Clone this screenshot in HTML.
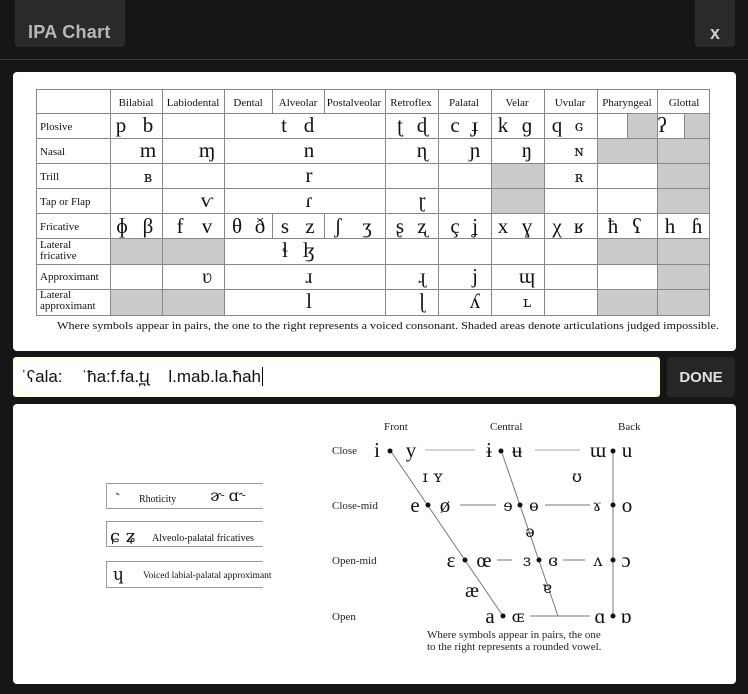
<!DOCTYPE html>
<html><head><meta charset="utf-8"><style>
html,body{margin:0;padding:0;width:748px;height:694px;background:#161616;overflow:hidden;font-family:"Liberation Sans",sans-serif}
.tab{position:absolute;left:15px;top:0;width:110px;height:47px;background:#2a2a2a;border-radius:0 0 4px 4px}
.tab span{position:absolute;left:13px;top:22px;color:#b8b8b8;font-weight:bold;font-size:18px;letter-spacing:0.3px}
.x{position:absolute;left:695px;top:0;width:40px;height:47px;background:#2a2a2a;border-radius:0 0 4px 4px;color:#ccc;font-weight:bold;font-size:18px;text-align:center;line-height:66px}
.hr{position:absolute;left:0;top:59px;width:748px;height:1px;background:#3a3a3a}
.p{position:absolute;background:#fff;border-radius:4px}
.inp{position:absolute;left:13px;top:357px;width:647px;height:40px;background:#fffff0;border-radius:3px}
.inp div{position:absolute;left:5px;top:5px;right:5px;bottom:5px;background:#fff;font-size:17px;line-height:30px;padding-left:3px;color:#111;font-family:"Liberation Sans","DejaVu Sans",sans-serif;white-space:pre}
.done{position:absolute;left:667px;top:357px;width:68px;height:40px;background:#262626;border-radius:3px;color:#e0e0e0;font-weight:bold;font-size:15px;text-align:center;line-height:42px}
svg{position:absolute;left:0;top:0}
svg text{font-family:"Liberation Serif","DejaVu Serif",serif}
svg text.sc{font-family:"DejaVu Serif",serif}
</style></head><body>
<div class="tab"><span>IPA Chart</span></div>
<div class="x">x</div>
<div class="hr"></div>
<div class="p" style="left:13px;top:72px;width:723px;height:279px"></div>
<div class="inp"><div>ˈʕala:    ˈħa:f.fa.t̪ɻ    l.mab.la.ħah<span style="border-left:1px solid #000;margin-left:1px"> </span></div></div>
<div class="done">DONE</div>
<div class="p" style="left:13px;top:404px;width:723px;height:280px"></div>
<svg width="748" height="694" viewBox="0 0 748 694">
<g fill="#cbcbcb">
<rect x="627" y="113" width="30" height="25"/><rect x="684" y="113" width="26" height="25"/>
<rect x="597" y="138" width="113" height="25"/>
<rect x="491" y="163" width="53" height="50"/><rect x="657" y="163" width="53" height="50"/>
<rect x="110" y="238" width="114" height="26"/><rect x="597" y="238" width="113" height="26"/>
<rect x="657" y="264" width="53" height="25"/>
<rect x="110" y="289" width="114" height="27"/><rect x="597" y="289" width="113" height="27"/>
</g>
<g stroke="#888" stroke-width="1" fill="none">
<rect x="36.5" y="89.5" width="673" height="226"/>
<path d="M36 113.5H710M36 138.5H710M36 163.5H710M36 188.5H710M36 213.5H710M36 238.5H710M36 264.5H710M36 289.5H710"/>
<path d="M110.5 89V316M162.5 89V316M224.5 89V316M385.5 89V316M438.5 89V316M491.5 89V316M544.5 89V316M597.5 89V316M657.5 89V316"/>
<path d="M272.5 89V113M324.5 89V113M272.5 213V238M324.5 213V238M627.5 113V138M684.5 113V138"/>
</g>
<g font-size="11" text-anchor="middle" fill="#111">
<text x="136" y="106">Bilabial</text><text x="193" y="106">Labiodental</text><text x="248" y="106">Dental</text><text x="298" y="106">Alveolar</text><text x="354" y="106">Postalveolar</text><text x="411" y="106">Retroflex</text><text x="464" y="106">Palatal</text><text x="517" y="106">Velar</text><text x="570" y="106">Uvular</text><text x="627" y="106">Pharyngeal</text><text x="684" y="106">Glottal</text>
</g>
<g font-size="11" fill="#111">
<text x="40" y="130">Plosive</text><text x="40" y="155">Nasal</text><text x="40" y="180">Trill</text><text x="40" y="205">Tap or Flap</text><text x="40" y="230">Fricative</text>
<text x="40" y="248">Lateral</text><text x="40" y="259">fricative</text><text x="40" y="280">Approximant</text><text x="40" y="298">Lateral</text><text x="40" y="309">approximant</text>
<text x="57" y="329" font-size="11" textLength="662" lengthAdjust="spacingAndGlyphs">Where symbols appear in pairs, the one to the right represents a voiced consonant. Shaded areas denote articulations judged impossible.</text>
</g>
<g font-size="21" text-anchor="middle" fill="#111">
<text x="121" y="132">p</text><text x="148" y="132">b</text><text x="284" y="132">t</text><text x="309" y="132">d</text><text x="400" y="132">ʈ</text><text x="422" y="132">ɖ</text><text x="455" y="132">c</text><text x="475" y="132">ɟ</text><text x="503" y="132">k</text><text x="527" y="132">ɡ</text><text x="557" y="132">q</text><text class="sc" x="579" y="131" font-size="15">ɢ</text><text x="662" y="132">ʔ</text>
<text x="148" y="157">m</text><text x="207" y="157">ɱ</text><text x="309" y="157">n</text><text x="422" y="157">ɳ</text><text x="475" y="157">ɲ</text><text x="527" y="157">ŋ</text><text class="sc" x="579" y="156" font-size="15">ɴ</text>
<text class="sc" x="148" y="182" font-size="15">ʙ</text><text x="309" y="182">r</text><text class="sc" x="579" y="182" font-size="15">ʀ</text>
<text x="207" y="207">ⱱ</text><text x="309" y="207">ɾ</text><text x="422" y="207">ɽ</text>
<text x="122" y="233">ɸ</text><text x="148" y="233">β</text><text x="180" y="233">f</text><text x="207" y="233">v</text><text x="237" y="233">θ</text><text x="260" y="233">ð</text><text x="285" y="233">s</text><text x="310" y="233">z</text><text x="338" y="233">ʃ</text><text x="367" y="233">ʒ</text><text x="400" y="233">ʂ</text><text x="422" y="233">ʐ</text><text x="455" y="233">ç</text><text x="475" y="233">ʝ</text><text x="503" y="233">x</text><text x="527" y="233">ɣ</text><text x="557" y="233">χ</text><text x="579" y="233">ʁ</text><text x="613" y="233">ħ</text><text x="637" y="233">ʕ</text><text x="670" y="233">h</text><text x="697" y="233">ɦ</text>
<text x="285" y="257">ɬ</text><text x="309" y="257">ɮ</text>
<text x="207" y="283">ʋ</text><text x="309" y="283">ɹ</text><text x="422" y="283">ɻ</text><text x="475" y="283">j</text><text x="527" y="283">ɰ</text>
<text x="309" y="308">l</text><text x="422" y="308">ɭ</text><text x="475" y="308">ʎ</text><text class="sc" x="527" y="307" font-size="15">ʟ</text>
</g>
<g stroke="#999" fill="none"><path d="M263 483.5H106.5V508.5H263M263 521.5H106.5V546.5H263M263 561.5H106.5V587.5H263"/></g>
<g fill="#111">
<text x="116" y="498" font-size="14">˞</text><text x="139" y="502" font-size="10">Rhoticity</text><text class="sc" x="210" y="501" font-size="16">ɚ ɑ˞</text>
<text class="sc" x="110" y="542" font-size="18">ɕ ʑ</text><text x="152" y="541" font-size="10">Alveolo-palatal fricatives</text>
<text class="sc" x="113" y="580" font-size="17">ɥ</text><text x="143" y="578" font-size="9.5">Voiced labial-palatal approximant</text>
</g>
<g stroke="#bbb" stroke-width="1.2"><path d="M425 450H475M535 450H580"/></g>
<g stroke="#777" stroke-width="1"><path d="M390 450L503 616M501 450L558 616M613 450V616M460 505H496M545 505H590M497 560H512M563 560H585M530 616H590"/></g>
<g fill="#111"><circle cx="390" cy="451" r="2.5"/><circle cx="501" cy="451" r="2.5"/><circle cx="613" cy="451" r="2.5"/><circle cx="428" cy="505" r="2.5"/><circle cx="520" cy="505" r="2.5"/><circle cx="613" cy="505" r="2.5"/><circle cx="465" cy="560" r="2.5"/><circle cx="539" cy="560" r="2.5"/><circle cx="613" cy="560" r="2.5"/><circle cx="503" cy="616" r="2.5"/><circle cx="613" cy="616" r="2.5"/></g>
<g font-size="11" fill="#222">
<text x="384" y="430">Front</text><text x="490" y="430">Central</text><text x="618" y="430">Back</text>
<text x="332" y="454">Close</text><text x="332" y="509">Close-mid</text><text x="332" y="564">Open-mid</text><text x="332" y="620">Open</text>
<text x="427" y="638">Where symbols appear in pairs, the one</text><text x="427" y="650">to the right represents a rounded vowel.</text>
</g>
<g font-size="21" text-anchor="middle" fill="#111">
<text x="377" y="457">i</text><text x="411" y="457">y</text><text x="489" y="457">ɨ</text><text x="517" y="457">ʉ</text><text x="598" y="457">ɯ</text><text x="627" y="457">u</text>
<text class="sc" x="433" y="482" font-size="16">ɪ ʏ</text><text class="sc" x="577" y="482" font-size="16">ʊ</text>
<text x="415" y="512">e</text><text x="445" y="512">ø</text><text class="sc" x="508" y="511" font-size="16">ɘ</text><text class="sc" x="534" y="511" font-size="16">ɵ</text><text class="sc" x="597" y="511" font-size="16">ɤ</text><text x="627" y="512">o</text>
<text class="sc" x="530" y="537" font-size="16">ə</text>
<text x="451" y="567">ɛ</text><text x="484" y="567">œ</text><text class="sc" x="527" y="566" font-size="16">ɜ</text><text class="sc" x="553" y="566" font-size="16">ɞ</text><text class="sc" x="598" y="566" font-size="16">ʌ</text><text x="626" y="567">ɔ</text>
<text x="472" y="597">æ</text><text class="sc" x="547" y="593" font-size="16">ɐ</text>
<text x="490" y="623">a</text><text class="sc" x="518" y="622" font-size="16">ɶ</text><text x="600" y="623">ɑ</text><text x="626" y="623">ɒ</text>
</g>
</svg>
</body></html>
